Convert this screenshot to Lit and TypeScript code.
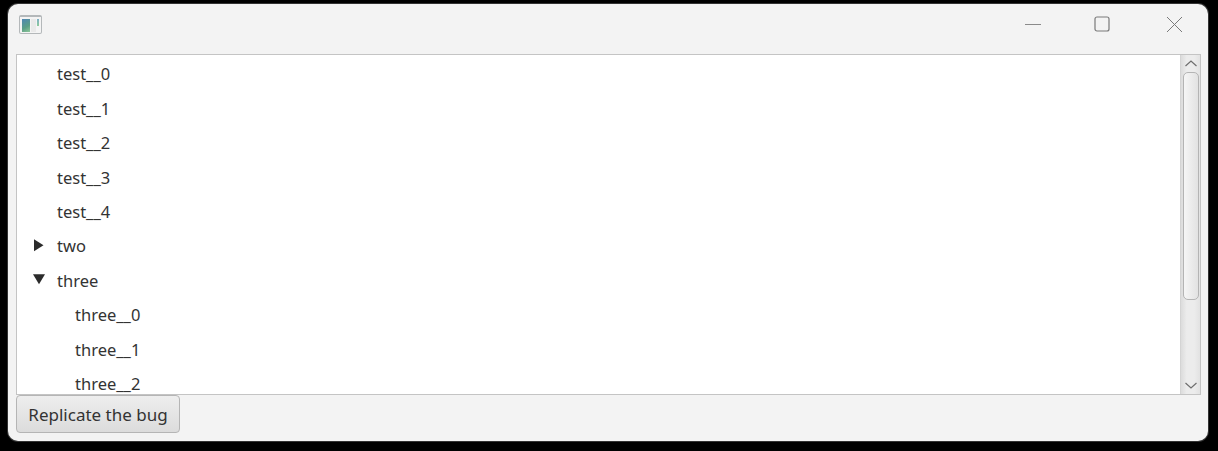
import { LitElement, html, css, svg } from "lit";
import { customElement } from "lit/decorators.js";

type Row = { label: string; depth: number; arrow?: "right" | "down" };
const rows: Row[] = [
  { label: "test__0", depth: 0 },
  { label: "test__1", depth: 0 },
  { label: "test__2", depth: 0 },
  { label: "test__3", depth: 0 },
  { label: "test__4", depth: 0 },
  { label: "two", depth: 0, arrow: "right" },
  { label: "three", depth: 0, arrow: "down" },
  { label: "three__0", depth: 1 },
  { label: "three__1", depth: 1 },
  { label: "three__2", depth: 1 },
];

@customElement("app-root")
export class AppRoot extends LitElement {
  static styles = css`
    :host { display: block; width: 1218px; height: 451px; background: #000; box-sizing: border-box; padding: 4px 10px 10px 8px; overflow: hidden; font-family: "Noto Sans", "Open Sans", sans-serif; }
    .win { height: 100%; box-sizing: border-box; background: #f3f3f3; border-radius: 10px; display: flex; flex-direction: column; padding: 0 7px 8px 8px; box-shadow: 0 0 0 1px #333; }
    .title { height: 50px; box-sizing: border-box; padding-bottom: 10px; flex: none; display: flex; align-items: center; }
    .appicon { width: 23px; height: 19px; margin-left: 3px; box-sizing: border-box; border: 1px solid #b4b8ba; border-top-width: 2px; border-radius: 2px; background: #f4f4f4; display: flex; gap: 1px; padding: 2px 2px 1px; }
    .appicon i { display: block; width: 9px; height: 13px; background: linear-gradient(150deg, #4f86b4, #5c9f86 60%, #8fc79a); }
    .appicon u { display: block; width: 5px; height: 13px; background: #e9e9e9; }
    .appicon b { display: block; width: 2px; height: 7px; background: linear-gradient(#7fb0c8, #8ecb9a); }
    .spacer { flex: 1; }
    .ctrl { display: block; }
    .ctrl.min { margin-right: 52px; }
    .ctrl.max { margin-right: 56px; }
    .ctrl.close { margin-right: 18px; }
    .tree { flex: 1; min-height: 0; display: flex; border: 1px solid #c4c4c4; background: #fff; }
    .list { flex: 1; overflow: hidden; padding-top: 1.7px; }
    .row { height: 34.4px; display: flex; align-items: center; font-size: 16.5px; color: #333; white-space: nowrap; }
    .arrowbox { width: 40px; flex: none; display: flex; padding-left: 16px; box-sizing: border-box; }
    .d1 { padding-left: 18px; }
    .sb { width: 19px; flex: none; display: flex; flex-direction: column; align-items: center; background: linear-gradient(90deg, #dcdcdc, #ececec 30%, #ececec 70%, #e2e2e2); border-left: 1px solid #d4d4d4; }
    .sb .btn { flex: none; height: 17px; display: flex; align-items: center; justify-content: center; }
    .thumb { flex: none; width: 16px; height: 228px; box-sizing: border-box; border: 1px solid #b4b4b4; border-radius: 5px; background: linear-gradient(90deg, #f6f6f6, #e2e2e2); }
    .fill { flex: 1; }
    .foot { flex: none; }
    button { display: block; height: 38px; width: 164px; padding: 0; box-sizing: border-box; border: 1px solid #b5b5b5; border-radius: 4px; background: linear-gradient(#eeeeee, #dcdcdc); font: inherit; font-size: 17px; color: #333; }
  `;

  arrow(kind?: "right" | "down") {
    if (!kind) return html`<span class="arrowbox"></span>`;
    const p = kind === "right" ? "M1 0.3 L10.5 6.3 L1 12.3 Z" : "M0 0.3 L12 0.3 L6 10.3 Z";
    return html`<span class="arrowbox"><svg width="14" height="13" viewBox="0 0 14 13">${svg`<path d=${p} fill="#2b2b2b"/>`}</svg></span>`;
  }

  render() {
    return html`<div class="win">
      <div class="title">
        <div class="appicon"><i></i><u></u><b></b></div>
        <div class="spacer"></div>
        <svg class="ctrl min" width="18" height="18" viewBox="0 0 18 18"><path d="M1 9.5H17" stroke="#8a8a8a" fill="none"/></svg>
        <svg class="ctrl max" width="16" height="16" viewBox="0 0 16 16"><rect x="1" y="1" width="14" height="14" rx="2" stroke="#7a7a7a" stroke-width="1.2" fill="none"/></svg>
        <svg class="ctrl close" width="17" height="17" viewBox="0 0 17 17"><path d="M1 1L16 16M16 1L1 16" stroke="#7a7a7a" fill="none"/></svg>
      </div>
      <div class="tree">
        <div class="list">
          ${rows.map((r) => html`<div class="row ${r.depth ? "d1" : ""}">${this.arrow(r.arrow)}<span>${r.label}</span></div>`)}
        </div>
        <div class="sb">
          <div class="btn"><svg width="14" height="9" viewBox="0 0 14 9"><path d="M1.5 7L7 2L12.5 7" stroke="#6e6e6e" stroke-width="1.2" fill="none"/></svg></div>
          <div class="thumb"></div>
          <div class="fill"></div>
          <div class="btn"><svg width="14" height="9" viewBox="0 0 14 9"><path d="M1.5 2L7 7L12.5 2" stroke="#6e6e6e" stroke-width="1.2" fill="none"/></svg></div>
        </div>
      </div>
      <div class="foot"><button>Replicate the bug</button></div>
    </div>`;
  }
}
